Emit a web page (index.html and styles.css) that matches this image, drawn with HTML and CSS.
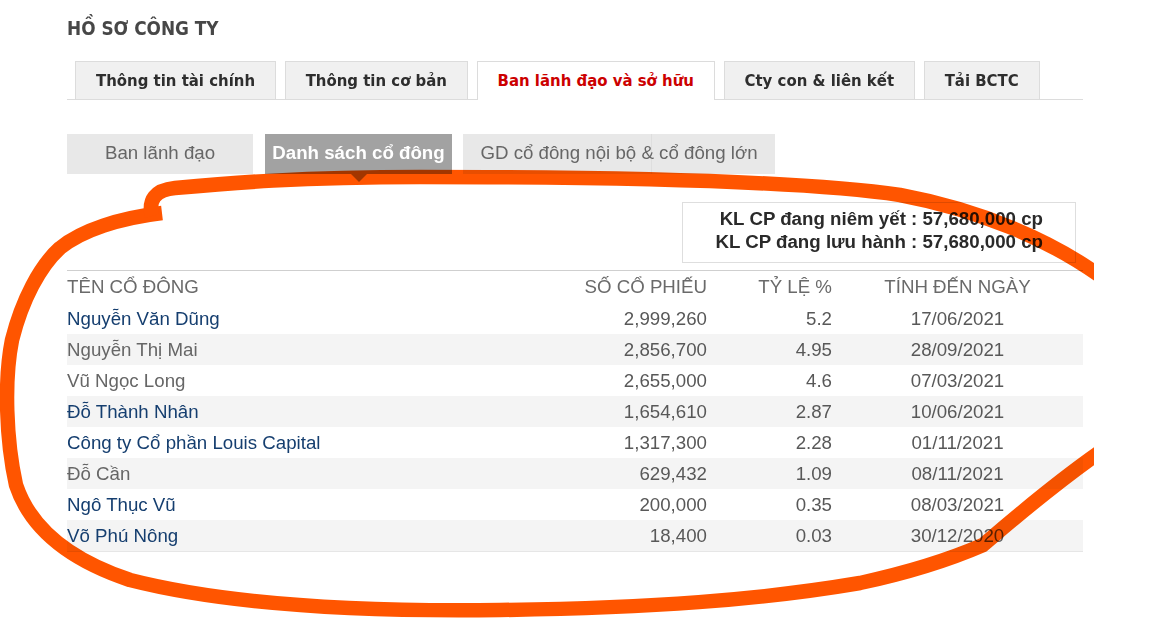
FILE: index.html
```html
<!DOCTYPE html>
<html lang="vi">
<head>
<meta charset="utf-8">
<title>Hồ sơ công ty</title>
<link rel="stylesheet" href="styles.css">
</head>
<body>
<div class="page">
  <h1 class="title">HỒ SƠ CÔNG TY</h1>

  <div class="tabs">
    <div class="tab">Thông tin tài chính</div>
    <div class="tab">Thông tin cơ bản</div>
    <div class="tab tab--active">Ban lãnh đạo và sở hữu</div>
    <div class="tab">Cty con &amp; liên kết</div>
    <div class="tab">Tải BCTC</div>
  </div>

  <div class="subtabs">
    <div class="subtab">Ban lãnh đạo</div>
    <div class="subtab subtab--active">Danh sách cổ đông</div>
    <div class="subtab subtab--wide">GD cổ đông nội bộ &amp; cổ đông lớn</div>
  </div>

  <div class="info-row">
    <div class="info-box">
      <div>KL CP đang niêm yết : 57,680,000 cp</div>
      <div>KL CP đang lưu hành : 57,680,000 cp</div>
    </div>
  </div>

  <div class="sh-table">
    <div class="sh-head">
      <div class="c-name">TÊN CỔ ĐÔNG</div>
      <div class="c-num">SỐ CỔ PHIẾU</div>
      <div class="c-num">TỶ LỆ %</div>
      <div class="c-date">TÍNH ĐẾN NGÀY</div>
    </div>
    <div class="sh-body">
      <div class="sh-row"><div class="c-name blue">Nguyễn Văn Dũng</div><div class="c-num">2,999,260</div><div class="c-num">5.2</div><div class="c-date">17/06/2021</div></div>
      <div class="sh-row"><div class="c-name gray">Nguyễn Thị Mai</div><div class="c-num">2,856,700</div><div class="c-num">4.95</div><div class="c-date">28/09/2021</div></div>
      <div class="sh-row"><div class="c-name gray">Vũ Ngọc Long</div><div class="c-num">2,655,000</div><div class="c-num">4.6</div><div class="c-date">07/03/2021</div></div>
      <div class="sh-row"><div class="c-name blue">Đỗ Thành Nhân</div><div class="c-num">1,654,610</div><div class="c-num">2.87</div><div class="c-date">10/06/2021</div></div>
      <div class="sh-row"><div class="c-name blue">Công ty Cổ phần Louis Capital</div><div class="c-num">1,317,300</div><div class="c-num">2.28</div><div class="c-date">01/11/2021</div></div>
      <div class="sh-row"><div class="c-name gray">Đỗ Cần</div><div class="c-num">629,432</div><div class="c-num">1.09</div><div class="c-date">08/11/2021</div></div>
      <div class="sh-row"><div class="c-name blue">Ngô Thục Vũ</div><div class="c-num">200,000</div><div class="c-num">0.35</div><div class="c-date">08/03/2021</div></div>
      <div class="sh-row"><div class="c-name blue">Võ Phú Nông</div><div class="c-num">18,400</div><div class="c-num">0.03</div><div class="c-date">30/12/2020</div></div>
    </div>
  </div>
</div>

<svg class="annotation" width="1094" height="618" viewBox="0 0 1094 618" aria-hidden="true">
  <path d="M162 213 C120 218, 82 230, 60 248 C40 266, 22 300, 12 340 C4 380, 6 440, 16 485 C31 530, 70 560, 130 580 C220 603, 350 612, 500 610 C650 608, 760 600, 860 583 C920 570, 960 555, 983 545 C1010 522, 1050 487, 1100 452"/>
  <path d="M152 216 C148 200, 155 190, 175 188 C230 183, 300 177, 420 177 C600 177, 800 180, 900 195 C980 210, 1050 240, 1100 276"/>
</svg>
</body>
</html>
```

FILE: styles.css
```css
html, body {
  margin: 0;
  padding: 0;
  background: #fff;
}

body {
  font-family: "Liberation Sans", Arial, sans-serif;
  color: #333;
  position: relative;
  width: 1153px;
  height: 618px;
  overflow: hidden;
}

.page {
  padding: 14px 0 0 67px;
  width: 1016px;
}

.title {
  margin: 0;
  font-family: "DejaVu Sans Condensed", "DejaVu Sans", sans-serif;
  font-stretch: condensed;
  font-weight: bold;
  font-size: 18.8px;
  line-height: 30px;
  color: #474747;
}

/* main tabs */
.tabs {
  margin-top: 17px;
  display: flex;
  gap: 8.6px;
  padding-left: 8px;
  height: 38px;
  border-bottom: 1px solid #dcdcdc;
}

.tab {
  box-sizing: border-box;
  height: 38px;
  padding: 0 20px;
  border: 1px solid #dcdcdc;
  border-bottom: none;
  background: #f0f0f0;
  font-family: "DejaVu Sans Condensed", "DejaVu Sans", sans-serif;
  font-stretch: condensed;
  font-weight: bold;
  font-size: 16.6px;
  line-height: 37px;
  color: #2e2e2e;
  white-space: nowrap;
}

.tab--active {
  height: 39px;
  background: #fff;
  color: #cc0000;
  position: relative;
  z-index: 1;
}

/* sub tabs */
.subtabs {
  margin-top: 34px;
  display: flex;
  height: 40px;
}

.subtab {
  width: 186px;
  height: 40px;
  margin-right: 12px;
  background: #e8e8e8;
  color: #666;
  font-size: 18.7px;
  line-height: 37px;
  text-align: center;
  white-space: nowrap;
}

.subtab--active {
  width: 187px;
  margin-right: 11px;
  background: #a2a2a2;
  color: #fff;
  font-weight: bold;
  position: relative;
}

.subtab--active::after {
  content: "";
  position: absolute;
  left: 50%;
  top: 40px;
  margin-left: -8px;
  border-left: 8px solid transparent;
  border-right: 8px solid transparent;
  border-top: 8px solid #a2a2a2;
}

.subtab--wide {
  width: 312px;
  margin-right: 0;
  background:
    linear-gradient(to right, transparent 188px, #dedede 188px, #dedede 189px, transparent 189px),
    #e8e8e8;
}

/* info box */
.info-row {
  display: flex;
  justify-content: flex-end;
  margin-top: 28px;
  padding-right: 7px;
}

.info-box {
  box-sizing: border-box;
  width: 394px;
  height: 61px;
  border: 1px solid #dedede;
  padding: 4px 32px 0 0;
  text-align: right;
  font-weight: bold;
  font-size: 18.7px;
  line-height: 23px;
  color: #2a2a2a;
}

/* shareholder table */
.sh-table {
  margin-top: 7px;
  border-top: 1px solid #cfcfcf;
  border-bottom: 1px solid #e6e6e6;
  font-size: 18.7px;
}

.sh-head,
.sh-row {
  display: grid;
  grid-template-columns: 513px 127px 125px 251px;
  align-items: center;
  color: #666;
}

.sh-head {
  height: 32px;
  color: #6a6a6a;
}

.sh-row {
  height: 31px;
  color: #585858;
}

.sh-body .sh-row:nth-child(even) {
  background: #f4f4f4;
}

.c-name {
  text-align: left;
  white-space: nowrap;
}

.c-num {
  text-align: right;
}

.c-date {
  text-align: center;
}

.blue {
  color: #153e6f;
}

.gray {
  color: #666;
}

/* hand-drawn annotation */
.annotation {
  position: absolute;
  left: 0;
  top: 0;
  pointer-events: none;
  mix-blend-mode: multiply;
}

.annotation path {
  fill: none;
  stroke: #ff5500;
  stroke-width: 14.5;
  stroke-linecap: butt;
  stroke-linejoin: round;
}
```
